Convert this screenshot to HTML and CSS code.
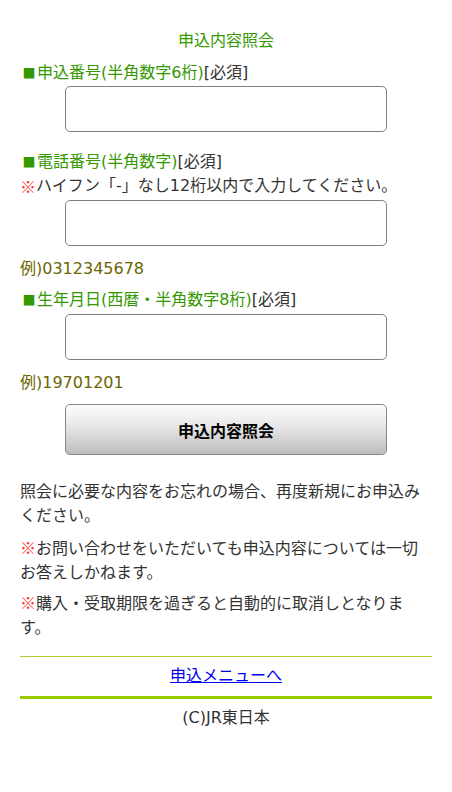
FILE: index.html
```html
<!DOCTYPE html>
<html lang="ja">
<head>
<meta charset="utf-8">
<title>申込内容照会</title>
<link rel="stylesheet" href="styles.css">
</head>
<body>
<div class="page">
  <h1 class="title">申込内容照会</h1>

  <div class="label first"><span class="sq">■</span>申込番号(半角数字6桁)<span class="req">[必須]</span></div>
  <input class="field f1" type="text">

  <div class="label second"><span class="sq">■</span>電話番号(半角数字)<span class="req">[必須]</span></div>
  <div class="note"><span class="mark">※</span>ハイフン「-」なし12桁以内で入力してください。</div>
  <input class="field f2" type="text">
  <div class="example">例)0312345678</div>

  <div class="label third"><span class="sq">■</span>生年月日(西暦・半角数字8桁)<span class="req">[必須]</span></div>
  <input class="field f2" type="text">
  <div class="example">例)19701201</div>

  <button class="submit" type="button">申込内容照会</button>

  <p class="text p1">照会に必要な内容をお忘れの場合、再度新規にお申込みください。</p>
  <p class="text p2"><span class="pmark">※</span>お問い合わせをいただいても申込内容については一切お答えしかねます。</p>
  <p class="text p3"><span class="pmark">※</span>購入・受取期限を過ぎると自動的に取消しとなります。</p>

  <div class="rule thin"></div>
  <div class="menu"><a href="#">申込メニューへ</a></div>
  <div class="rule thick"></div>
  <div class="footer">(C)JR東日本</div>
</div>
</body>
</html>
```

FILE: styles.css
```css
html, body {
  margin: 0;
  padding: 0;
  background: #fff;
}
body {
  font-family: "DejaVu Sans", "Noto Sans CJK JP", sans-serif;
  font-size: 16px;
  line-height: 24px;
  color: #333;
}
.page {
  padding: 29px 20px 40px;
}
.title {
  margin: 0;
  font-size: 16px;
  font-weight: normal;
  line-height: 24px;
  color: #339900;
  text-align: center;
}
.label {
  color: #339900;
  padding-left: 1px;
}
.label.first { margin-top: 8px; }
.label.second { margin-top: 18px; }
.label.third { margin-top: 7px; }
.sq {
  display: inline-block;
  vertical-align: top;
  width: 16px;
  height: 24px;
  line-height: 24px;
  font-family: "Noto Sans CJK JP", sans-serif;
  font-size: 13px;
  text-align: center;
  color: #339900;
}
.req { color: #333; }
.note { color: #333; }
.mark {
  display: inline-block;
  vertical-align: top;
  height: 24px;
  line-height: 24px;
  font-family: "Noto Sans CJK JP", sans-serif;
  color: #ff3333;
}
.pmark { color: #ff3333; }
.field {
  display: block;
  box-sizing: border-box;
  width: 322px;
  height: 46px;
  margin: 1px auto 0;
  border: 1px solid #808080;
  border-radius: 5px;
  background: #fff;
  font: inherit;
  padding: 0 8px;
}
.field.f2 { margin-top: 2px; }
.example {
  margin-top: 11px;
  color: #6b6600;
}
.submit {
  display: block;
  box-sizing: border-box;
  width: 322px;
  height: 51px;
  margin: 9px auto 0;
  border: 1px solid #888;
  border-radius: 5px;
  background: linear-gradient(to bottom, #fdfdfd 0%, #e6e6e6 45%, #bdbdbd 100%);
  font-family: "Noto Sans CJK JP", sans-serif;
  font-size: 16px;
  font-weight: bold;
  color: #000;
  padding: 0;
}
.text {
  margin: 0;
  font-family: "Noto Sans CJK JP", sans-serif;
  line-height: 24px;
}
.p1 { margin-top: 23px; }
.p2 { margin-top: 9px; }
.p3 { margin-top: 7px; }
.rule { background: #99cc00; }
.rule.thin { height: 1px; margin-top: 18px; background: #a8cc33; }
.rule.thick { height: 3px; margin-top: 8px; }
.menu {
  margin-top: 7px;
  text-align: center;
}
.menu a { color: #0000ee; text-decoration: underline; }
.footer {
  margin-top: 7px;
  text-align: center;
  color: #333;
}
```
